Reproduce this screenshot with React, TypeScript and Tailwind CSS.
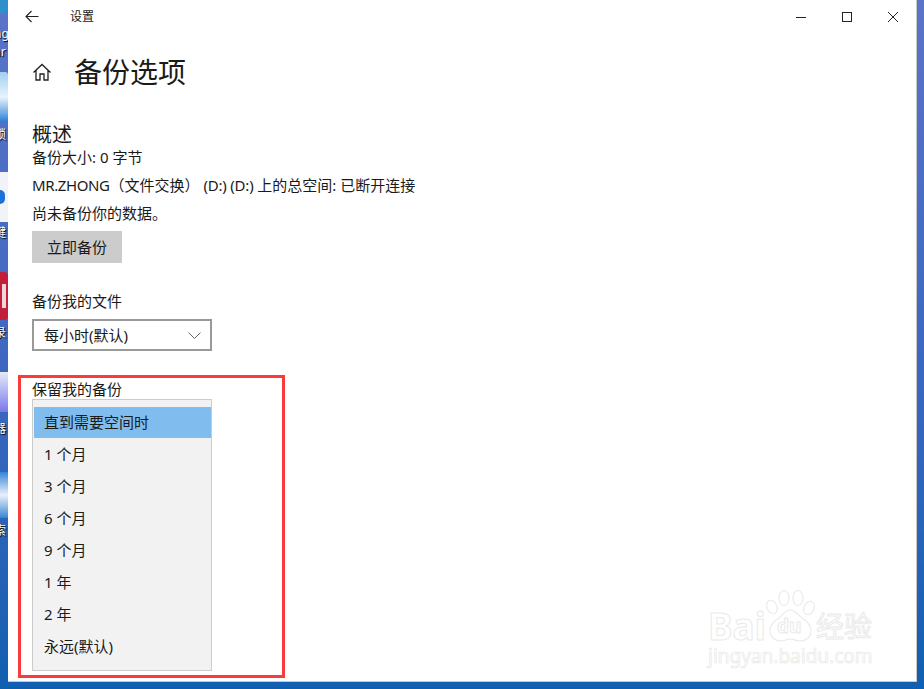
import React from "react";

const FONT = "[font-family:'Noto_Sans','Noto_Sans_CJK_SC',sans-serif]";

const MONTHS = ["1 个月", "3 个月", "6 个月", "9 个月", "1 年", "2 年", "永远(默认)"];

const LABEL = "-ml-[6px] text-[12px] leading-[14px] whitespace-nowrap text-white [text-shadow:1px_1px_1px_#000]";

// slivers of desktop shortcuts that stick out left of the settings window
function DesktopStrip() {
  return (
    <div className="flex h-[689px] w-[8px] flex-col overflow-hidden">
      <div className="h-[14px] rounded-br-[6px] bg-[#2f8fc8]" />
      <div className={`mt-[13px] ${LABEL}`}>ng</div>
      <div className={`mt-[4px] ${LABEL}`}>ar</div>
      <div className="mt-[13px] h-[50px] rounded-r-[3px] bg-gradient-to-b from-[#9fd0ef] via-[#e6f3fb] to-[#1b7fd6]" />
      <div className={`mt-[6px] ${LABEL}`}>锁</div>
      <div className="mt-[30px] h-[50px] bg-[#f2f3f8] pt-[18px]">
        <div className="h-[14px] w-[5px] rounded-r-full bg-[#1d70d8]" />
      </div>
      <div className={`mt-[4px] ${LABEL}`}>键</div>
      <div className="mt-[32px] h-[48px] rounded-r-[4px] bg-[#c0203a] p-[2px]">
        <div className="mt-[10px] h-[24px] w-[4px] bg-[#f2d6da]" />
      </div>
      <div className={`mt-[6px] ${LABEL}`}>录</div>
      <div className="mt-[32px] h-[40px] bg-gradient-to-b from-[#e8e8f6] to-[#7b78e8]" />
      <div className={`mt-[10px] ${LABEL}`}>器</div>
      <div className="mt-[36px] h-[46px] bg-gradient-to-b from-[#2f86d6] via-[#e8f0f8] to-[#2f86d6]" />
      <div className={`mt-[6px] ${LABEL}`}>索</div>
    </div>
  );
}

function Watermark() {
  const outline = "text-transparent [-webkit-text-stroke:1px_#eaeaea]";
  return (
    <div className="absolute left-[708px] top-[590px] flex w-[166px] flex-col items-start">
      <div className="flex h-[54px] items-end">
        <div className={`h-[34px] w-[57px] text-[37px] font-bold leading-[32px] ${outline}`}>Bai</div>
        <div className="relative h-[54px] w-[50px]">
          <svg width="50" height="54" viewBox="0 0 50 54" fill="#fff" stroke="#e9e9e9" strokeWidth="1.1">
            <ellipse cx="7" cy="17" rx="5" ry="7" transform="rotate(-25 7 17)" />
            <ellipse cx="19" cy="8" rx="5" ry="7.5" />
            <ellipse cx="33" cy="8" rx="5" ry="7.5" />
            <ellipse cx="44" cy="18" rx="5" ry="7" transform="rotate(25 44 18)" />
            <path d="M25 20c-5 0-7 5-11 8-5 3-9 7-9 13 0 6 5 10 11 10 3 0 6-2 9-2s6 2 10 2c6 0 11-4 11-10 0-6-4-10-9-13-4-3-7-8-12-8z" />
          </svg>
          <span className={`absolute bottom-[7px] left-[12px] text-[19px] font-bold leading-[22px] ${outline}`}>du</span>
        </div>
        <div className={`ml-[1px] h-[34px] text-[28px] leading-[32px] ${outline}`}>经验</div>
      </div>
      <div className="mt-[1px] text-[19px] leading-[22px] text-transparent [-webkit-text-stroke:0.7px_#e8e8e8]">jingyan.baidu.com</div>
    </div>
  );
}

export default function App() {
  return (
    <div className={`relative flex h-[689px] w-[924px] items-start overflow-hidden bg-gradient-to-b from-[#5a74c8] via-[#3f68c0] to-[#0f5fb0] ${FONT}`}>
      <DesktopStrip />

      {/* settings window */}
      <div className="h-[682px] w-[909px] border-b border-r border-[#c8c8c8] bg-white text-[#1a1a1a]">
        {/* title bar */}
        <div className="flex h-[34px] items-center pl-[17px] pr-[18px]">
          <svg width="14" height="14" viewBox="0 0 14 14" fill="none" stroke="#222" strokeWidth="1.1">
            <path d="M13.5 6.5H1M6.5 1L1 6.5L6.5 12" />
          </svg>
          <span className="ml-[31px] text-[12px] leading-[16px]">设置</span>
          <div className="ml-auto flex items-center gap-[36px]">
            <div className="h-px w-[10px] bg-[#222]" />
            <div className="h-[10px] w-[10px] border border-[#222]" />
            <svg width="10" height="10" viewBox="0 0 10 10" stroke="#222" strokeWidth="1">
              <path d="M0 0L10 10M10 0L0 10" />
            </svg>
          </div>
        </div>

        <div className="pl-[24px]">
          {/* page heading */}
          <div className="mt-[15px] flex h-[46px] items-center">
            <svg width="20" height="20" viewBox="0 0 20 20" fill="none" stroke="#222" strokeWidth="1.3">
              <path d="M1.5 10.5L10 2.5L18.5 10.5M4 8.5V18H8V12H12V18H16V8.5" />
            </svg>
            <h1 className="ml-[22px] text-[28px] font-normal leading-[46px]">备份选项</h1>
          </div>

          {/* overview */}
          <h2 className="mt-[27px] text-[20px] font-normal leading-[26px]">概述</h2>
          <p className="text-[15px] leading-[18px]">备份大小: 0 字节</p>
          <p className="mt-[10px] text-[15px] leading-[18px]">
            <span className="tracking-[-0.4px]">MR.ZHONG</span>（文件交换） <span className="tracking-[-0.2px]">(D:) (D:)</span> 上的总空间: 已断开连接
          </p>
          <p className="mt-[10px] text-[15px] leading-[18px]">尚未备份你的数据。</p>
          <button type="button" className="mt-[9px] block h-[32px] w-[90px] bg-[#cccccc] text-[15px] leading-[32px]">立即备份</button>

          <p className="mt-[29px] text-[15px] leading-[18px]">备份我的文件</p>
          <div className="mt-[9px] flex h-[32px] w-[180px] items-center justify-between border-2 border-[#999999] pl-[10px] pr-[9px] text-[15px]">
            <span>每小时(默认)</span>
            <svg width="13" height="7" viewBox="0 0 13 7" fill="none" stroke="#666" strokeWidth="1">
              <path d="M0.5 0.5L6.5 6.5L12.5 0.5" />
            </svg>
          </div>

          <p className="mt-[29px] text-[15px] leading-[18px]">保留我的备份</p>
          {/* open dropdown */}
          <div className="mt-px h-[272px] w-[180px] border border-[#cccccc] bg-[#f2f2f2] pt-[7px] text-[15px]">
            <div className="ml-px flex h-[31px] w-[177px] items-center bg-[#80bdee] pb-[1px] pl-[10px]">直到需要空间时</div>
            <ul>
              {MONTHS.map((m) => (
                <li key={m} className="flex h-[32px] items-center pl-[11px]">{m}</li>
              ))}
            </ul>
          </div>
        </div>
      </div>

      {/* red annotation frame */}
      <div className="absolute left-[18px] top-[375px] h-[303px] w-[267px] border-[3px] border-[#fb3b3b]" />
      <Watermark />
    </div>
  );
}
